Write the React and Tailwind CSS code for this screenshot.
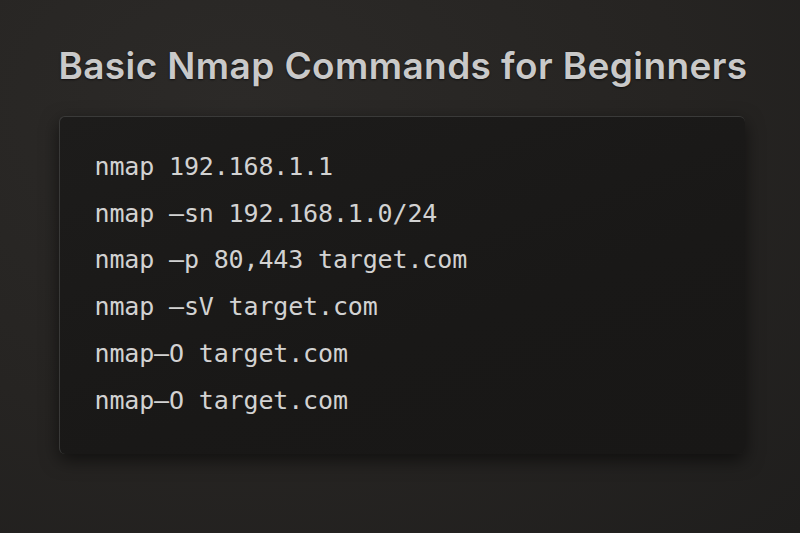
export default function App() {
  const lines = [
    "nmap 192.168.1.1",
    "nmap –sn 192.168.1.0/24",
    "nmap –p 80,443 target.com",
    "nmap –sV target.com",
    "nmap–O target.com",
    "nmap–O target.com",
  ];
  return (
    <div className="w-[800px] h-[533px] bg-[radial-gradient(ellipse_at_30%_20%,#2c2a28_0%,#262422_55%,#1f1e1d_100%)] flex flex-col items-center overflow-hidden">
      <h1
        className="mt-[44px] ml-[6px] text-[#c9c9c9] text-[37px] font-semibold tracking-[0.4px] leading-[44px] [text-shadow:0_1px_2px_rgba(0,0,0,0.6)]"
        style={{ fontFamily: "Inter, 'Liberation Sans', sans-serif" }}
      >
        Basic Nmap Commands for Beginners
      </h1>
      <div className="mt-[28px] ml-[3px] w-[686px] h-[338px] rounded-[6px] bg-[linear-gradient(160deg,#1d1c1b_0%,#191817_60%,#181716_100%)] border-t border-l border-[#3a3a39] shadow-[0_6px_18px_rgba(0,0,0,0.55)] pl-[35px] pt-[27px]">
        <div
          className="flex flex-col text-[#d2d2d2] text-[25px] leading-[46.7px] tracking-[-0.15px]"
          style={{ fontFamily: "'DejaVu Sans Mono', monospace" }}
        >
          {lines.map((l, i) => (
            <div key={i} className="whitespace-pre">{l}</div>
          ))}
        </div>
      </div>
    </div>
  );
}
